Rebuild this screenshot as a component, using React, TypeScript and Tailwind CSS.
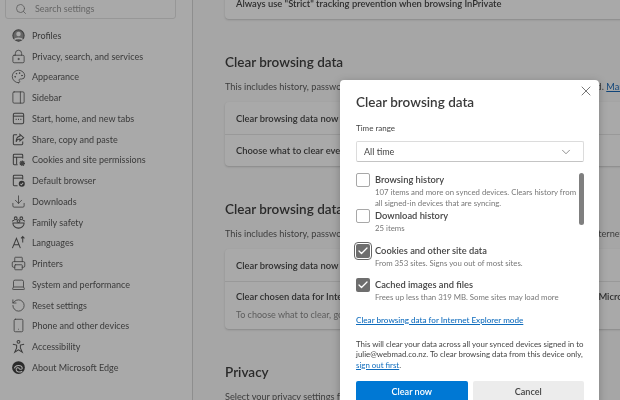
import React from "react";
import { Search, LockKeyhole, Palette, PanelRight, Download, Printer, Laptop, RotateCcw, Smartphone, X, ChevronDown, Check } from "lucide-react";

const sw = 1.3;
const sz = "w-[15px] h-[15px] shrink-0";

const Custom = ({ children }: { children: React.ReactNode }) => (
  <svg viewBox="0 0 16 16" fill="none" stroke="currentColor" strokeWidth={1.1} className={sz}>{children}</svg>
);

const items: [string, React.ReactNode][] = [
  ["Profiles", <Custom><circle cx="8" cy="8" r="6" fill="#666" /><circle cx="8" cy="6.5" r="2.4" fill="#a9a9a9" stroke="none" /><path d="M3.8 12.5c1-2.2 7.400-2.200 8.400 0" stroke="#a9a9a9" strokeWidth={1.6} /></Custom>],
  ["Privacy, search, and services", <LockKeyhole className={sz} strokeWidth={sw} />],
  ["Appearance", <Palette className={sz} strokeWidth={sw} />],
  ["Sidebar", <PanelRight className={sz} strokeWidth={sw} />],
  ["Start, home, and new tabs", <Custom><rect x="2.500" y="2.500" width="11" height="11" rx="1.500" /><path d="M2.500 5.500h11" /><path d="M5 9h1M7.500 9h1M10 9h1" strokeWidth={1.4} /></Custom>],
  ["Share, copy and paste", <Custom><path d="M6.500 3H3.500a1 1 0 0 0-1 1v8.500a1 1 0 0 0 1 1h8a1 1 0 0 0 1-1V10" /><path d="M9.500 2.500l4 3.500-4 3.500V7.500C7.500 7.500 6 8.500 5.500 10.500 5.500 7 7.500 4.800 9.500 4.500z" /></Custom>],
  ["Cookies and site permissions", <Custom><path d="M7 13.500H3.500a1 1 0 0 1-1-1v-9a1 1 0 0 1 1-1h8a1 1 0 0 1 1 1V7" /><path d="M2.500 5.500h10M6 5.500V13" /><circle cx="12" cy="12" r="2.200" fill="#444" strokeWidth={1.500} strokeDasharray="1 0.500" /></Custom>],
  ["Default browser", <Custom><path d="M7 13.500H3.500a1 1 0 0 1-1-1v-9a1 1 0 0 1 1-1h8a1 1 0 0 1 1 1V7" /><path d="M2.500 5.500h10" /><circle cx="11.500" cy="11.500" r="3.200" fill="#333" stroke="none" /><path d="M10 11.500l1.100 1.100 1.900-2" stroke="#a9a9a9" /></Custom>],
  ["Downloads", <Download className={sz} strokeWidth={sw} />],
  ["Family safety", <Custom><circle cx="5" cy="3.500" r="1.500" /><circle cx="11" cy="3.500" r="1.500" /><circle cx="8" cy="6.500" r="1.500" /><path d="M1.500 7c0-1 1-1.500 2-1.500M14.500 7c0-1-1-1.500-2-1.500M2 8.500c0 3 2.500 5.500 6 5.500s6-2.500 6-5.500z" /></Custom>],
  ["Languages", <Custom><path d="M1.500 14L5.800 3.500 10 14M3 10.500h5.500" /><path d="M12.500 8V1.800M10.700 3.500l1.800-1.800 1.800 1.800" /></Custom>],
  ["Printers", <Printer className={sz} strokeWidth={sw} />],
  ["System and performance", <Laptop className={sz} strokeWidth={sw} />],
  ["Reset settings", <RotateCcw className={sz} strokeWidth={sw} />],
  ["Phone and other devices", <Smartphone className={sz} strokeWidth={sw} />],
  ["Accessibility", <Custom><circle cx="8" cy="3" r="1.500" /><path d="M2 5.500l4 1v3L4 14l4-2.500L12 14l-2-4.500v-3l4-1" /></Custom>],
  ["About Microsoft Edge", <svg viewBox="0 0 16 16" className={sz}><circle cx="8" cy="8" r="6.800" fill="#2a2a2a" /><path d="M3.500 9c1-3.500 7.500-4.500 8.500-.500.300 1.500-2.500 1.800-3 .800C8 7.500 5 8 5.500 10.500 6 13 9.500 13.500 12 12" fill="none" stroke="#a9a9a9" strokeWidth={1.100} /></svg>],
];

const Row = ({ text, top, sub }: { text: string; top?: boolean; sub?: string }) => (
  <div className={`flex flex-col justify-center gap-[5px] pl-[11px] whitespace-nowrap ${top ? "" : "border-t border-[#999999]"} ${sub ? "h-[48px]" : "h-[32px]"}`}>
    <div className="text-[9.400px] leading-[13px] font-semibold text-[#2e2e2e]">{text}</div>
    {sub && <div className="text-[9px] leading-[13px] text-[#5c5c5c]">{sub}</div>}
  </div>
);

const Card = ({ children, className = "" }: { children: React.ReactNode; className?: string }) => (
  <div className={`w-[440px] rounded-[4px] bg-[#a9a9a9] shadow-[0_1px_2px_rgba(0,0,0,0.18)] ${className}`}>{children}</div>
);

const CheckRow = ({ label, sub, checked, focus, className = "" }: { label: string; sub: React.ReactNode; checked?: boolean; focus?: boolean; className?: string }) => (
  <div className={`flex gap-[5px] ${className}`}>
    <div className={`w-[14px] h-[14px] shrink-0 rounded-[2px] flex items-center justify-center ${checked ? "bg-[#6e6e6e]" : "border border-[#a8a8a8] bg-white"} ${focus ? "outline outline-[1.500px] outline-offset-[1px] outline-[#666666]" : ""}`}>
      {checked && <Check className="w-[12px] h-[12px] text-white" strokeWidth={2.600} />}
    </div>
    <div className="min-w-0">
      <div className="text-[9.300px] leading-[14px] font-semibold text-[#444444] whitespace-nowrap">{label}</div>
      <div className="text-[7.800px] leading-[10.500px] text-[#777777] whitespace-nowrap">{sub}</div>
    </div>
  </div>
);

export default function App() {
  return (
    <div className="relative w-[620px] h-[400px] overflow-hidden bg-[#a6a6a6] font-['Lato','Open_Sans',sans-serif] text-[#333333] blur-[0.3px]">
      <div className="flex h-full">
        <aside className="w-[193px] h-full shrink-0 bg-[#a9a9a9] border-r border-[#8e8e8e] pl-[5px]">
          <div className="w-[171px] h-[20px] -mt-[1px] rounded-b-[3px] border border-[#979797] flex items-center pl-[9px] gap-[8px] text-[#555555]">
            <Search className="w-[12px] h-[12px]" strokeWidth={1.500} />
            <span className="text-[9px] text-[#666666]">Search settings</span>
          </div>
          <nav className="mt-[6px] flex flex-col">
            {items.map(([t, ic]) => (
              <div key={t} className="h-[20.750px] flex items-center gap-[6px] pl-[6px] text-[#3d3d3d] whitespace-nowrap">
                <span className="text-[#3d3d3d] flex">{ic}</span>
                <span className="text-[9px] leading-none text-[#3a3a3a]">{t}</span>
              </div>
            ))}
          </nav>
        </aside>
        <main className="flex-1 min-w-0 pl-[32px]">
          <Card className="-mt-[13px]">
            <Row top text={'Always use "Strict" tracking prevention when browsing InPrivate'} />
          </Card>
          <h2 className="mt-[33px] text-[13.500px] leading-[20px] font-semibold text-[#2a2a2a]">Clear browsing data</h2>
          <p className="mt-[8px] text-[9.200px] leading-[14px] whitespace-nowrap text-[#3d3d3d]">This includes history, passwords, cookies, and more. Only data from this profile will be deleted. <span className="text-[#10457a] underline">Manage</span></p>
          <Card className="mt-[8px]">
            <Row top text="Clear browsing data now" />
            <Row text="Choose what to clear every time you close the browser" />
          </Card>
          <h2 className="mt-[33px] text-[13.500px] leading-[20px] font-semibold text-[#2a2a2a]">Clear browsing data for Internet Explorer</h2>
          <p className="mt-[8px] text-[9.200px] leading-[14px] whitespace-nowrap text-[#3d3d3d]">This includes history, passwords, downloads, cookies, and more from Internet Explorer and Internet Explorer mode.</p>
          <Card className="mt-[8px]">
            <Row top text="Clear browsing data now" />
            <Row text="Clear chosen data for Internet Explorer and Internet Explorer mode each time you close Microsoft" sub="To choose what to clear, go to the delete browsing history menu" />
          </Card>
          <h2 className="mt-[33px] text-[13.500px] leading-[20px] font-semibold text-[#2a2a2a]">Privacy</h2>
          <p className="mt-[8px] text-[9.200px] leading-[14px] whitespace-nowrap text-[#3d3d3d]">Select your privacy settings for Microsoft Edge.</p>
        </main>
      </div>

      <div className="absolute left-[340px] top-[80px] w-[259px] h-[340px] rounded-[4px] bg-white shadow-[0_2px_8px_rgba(0,0,0,0.25)] pl-[16px] pt-[12px]">
        <X className="absolute right-[5px] top-[3px] w-[16px] h-[16px] text-[#444444]" strokeWidth={1.100} />
        <h1 className="text-[13.500px] leading-[20px] font-semibold text-[#3a3a3a]">Clear browsing data</h1>
        <div className="mt-[10px] text-[8px] leading-[13px] text-[#444444]">Time range</div>
        <div className="mt-[6px] w-[228px] h-[21px] rounded-[2px] border border-[#dcdcdc] border-b-[#c4c4c4] flex items-center justify-between pl-[7px] pr-[10px]">
          <span className="text-[9px] text-[#444444]">All time</span>
          <ChevronDown className="w-[14px] h-[14px] text-[#555555]" strokeWidth={1.100} />
        </div>
        <div className="relative mt-[11px] w-[228px]">
          <div className="absolute right-0 top-0 w-[5px] h-[52px] rounded-full bg-[#7f7f7f]" />
          <CheckRow label="Browsing history" sub={<>107 items and more on synced devices. Clears history from<br />all signed-in devices that are syncing.</>} />
          <CheckRow className="mt-[1px]" label="Download history" sub="25 items" />
          <CheckRow className="mt-[10px]" checked focus label="Cookies and other site data" sub="From 353 sites. Signs you out of most sites." />
          <CheckRow className="mt-[10px]" checked label="Cached images and files" sub="Frees up less than 319 MB. Some sites may load more" />
        </div>
        <div className="mt-[11px] text-[8.100px] leading-[13px] font-medium text-[#0f6cbd] underline whitespace-nowrap">Clear browsing data for Internet Explorer mode</div>
        <p className="mt-[12px] w-[232px] text-[7.900px] leading-[10.500px] text-[#444444] whitespace-nowrap">This will clear your data across all your synced devices signed in to<br />julie@webmad.co.nz. To clear browsing data from this device only,<br /><span className="text-[#0f6cbd] underline">sign out first</span>.</p>
        <div className="mt-[11px] flex gap-[5px] w-[228px]">
          <div className="flex-1 h-[22px] rounded-[2px] bg-[#0078d4] flex items-center justify-center text-[9.100px] font-semibold text-white">Clear now</div>
          <div className="flex-1 h-[22px] rounded-[2px] bg-[#ececec] flex items-center justify-center text-[9.100px] font-semibold text-[#444444]">Cancel</div>
        </div>
      </div>
    </div>
  );
}
